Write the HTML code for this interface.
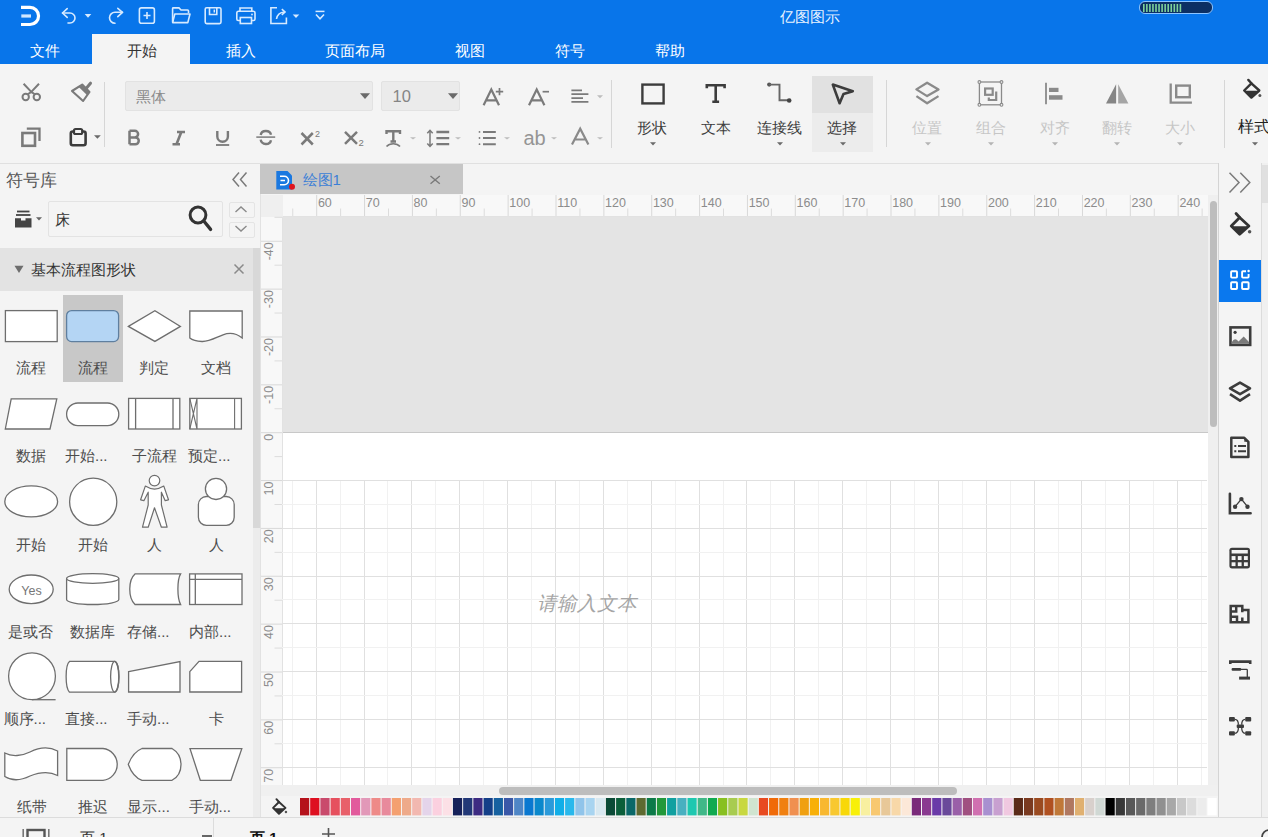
<!DOCTYPE html><html><head><meta charset="utf-8"><style>
html,body{margin:0;padding:0}
body{width:1268px;height:837px;overflow:hidden;position:relative;background:#f4f4f4;font-family:'Liberation Sans',sans-serif}
.t{position:absolute;white-space:nowrap;line-height:1;}
.b{position:absolute}
.s{position:absolute;overflow:visible}
</style></head><body>
<div class="b" style="left:0px;top:0px;width:1268px;height:64px;background:#0875ea;"></div>
<div class="b" style="left:92px;top:34px;width:98px;height:30px;background:#f4f4f4;"></div>
<svg class="s" style="left:18px;top:3px;" width="26" height="27" viewBox="0 0 26 27"><path d="M3,4.4 H12 A8.55,8.55 0 0 1 12,21.5 H3" fill="none" stroke="#fff" stroke-width="3.2"/><path d="M3.3,13 H13" stroke="#cfe6ff" stroke-width="3.2"/></svg>
<svg class="s" style="left:60px;top:6px;" width="20" height="20" viewBox="0 0 20 20"><path d="M2.5,7 H10 A5,5 0 0 1 10,17 H8" fill="none" stroke="#d6eaff" stroke-width="1.6" stroke-linecap="round"/><path d="M7.2,2.6 L2.5,7 L7.2,11.4" fill="none" stroke="#d6eaff" stroke-width="1.6" stroke-linecap="round" stroke-linejoin="round"/></svg>
<svg class="s" style="left:84px;top:13px;" width="8" height="6" viewBox="0 0 8 6"><path d="M0.7,1 H7.3 L4,4.8Z" fill="#d6eaff"/></svg>
<svg class="s" style="left:105px;top:6px;" width="20" height="20" viewBox="0 0 20 20"><path d="M17.5,6.3 H10 A5.5,5.5 0 0 0 10,17.3" fill="none" stroke="#d6eaff" stroke-width="1.6" stroke-linecap="round"/><path d="M12.8,2.3 L17.5,6.3 L12.8,10.7" fill="none" stroke="#d6eaff" stroke-width="1.6" stroke-linecap="round" stroke-linejoin="round"/></svg>
<svg class="s" style="left:136px;top:5px;" width="22" height="22" viewBox="0 0 22 22"><rect x="3.4" y="2.9" width="15" height="15.4" rx="2" fill="none" stroke="#d6eaff" stroke-width="1.6"/><path d="M11,7 V14 M7.5,10.5 H14.5" stroke="#d6eaff" stroke-width="1.6"/></svg>
<svg class="s" style="left:169px;top:5px;" width="24" height="22" viewBox="0 0 24 22"><path d="M3.6,17 V3.5 Q3.6,2.9 4.3,2.9 H10 L12,5 H18.5 Q19.5,5 19.5,6 V8" fill="none" stroke="#d6eaff" stroke-width="1.6" stroke-linejoin="round"/><path d="M3.6,17.6 L5.8,9 H21 L18.8,17.6 Z" fill="none" stroke="#d6eaff" stroke-width="1.6" stroke-linejoin="round"/></svg>
<svg class="s" style="left:202px;top:5px;" width="22" height="22" viewBox="0 0 22 22"><rect x="3.2" y="2.8" width="15.8" height="15.8" rx="1.5" fill="none" stroke="#d6eaff" stroke-width="1.6"/><path d="M7.5,2.8 V9.5 H14.8 V2.8" fill="none" stroke="#d6eaff" stroke-width="1.6"/><path d="M12.3,4.6 V7.5" stroke="#d6eaff" stroke-width="1.5"/></svg>
<svg class="s" style="left:234px;top:5px;" width="24" height="22" viewBox="0 0 24 22"><path d="M6,6.3 V3 H17.8 V6.3" fill="none" stroke="#d6eaff" stroke-width="1.6"/><path d="M6.3,15.5 H4.2 Q2.8,15.5 2.8,14 V8 Q2.8,6.3 4.5,6.3 H19.5 Q21,6.3 21,8 V14 Q21,15.5 19.6,15.5 H17.5" fill="none" stroke="#d6eaff" stroke-width="1.6"/><rect x="6.3" y="12.5" width="11.2" height="6" fill="none" stroke="#d6eaff" stroke-width="1.6"/><circle cx="18" cy="9.5" r="0.9" fill="#d6eaff"/></svg>
<svg class="s" style="left:268px;top:5px;" width="22" height="22" viewBox="0 0 22 22"><path d="M9,2.8 H2.9 V18.5 H18.4 V12.5" fill="none" stroke="#d6eaff" stroke-width="1.6"/><path d="M8.5,14 Q9.5,7.5 16.5,7" fill="none" stroke="#d6eaff" stroke-width="1.6"/><path d="M13.8,4.2 L17,7 L13.8,9.8" fill="none" stroke="#d6eaff" stroke-width="1.6"/></svg>
<svg class="s" style="left:292px;top:13px;" width="8" height="6" viewBox="0 0 8 6"><path d="M0.7,1.5 H7.3 L4,5Z" fill="#d6eaff"/></svg>
<svg class="s" style="left:313px;top:8px;" width="14" height="14" viewBox="0 0 14 14"><path d="M2.5,3.4 H11.5" stroke="#d6eaff" stroke-width="1.5"/><path d="M3,6.5 L7,10.8 L11,6.5" fill="none" stroke="#d6eaff" stroke-width="1.6"/></svg>
<div class="t" style="left:780px;top:9px;font-size:15px;color:#eaf3ff;">亿图图示</div>
<div class="b" style="left:1139px;top:1px;width:72px;height:11px;border:1.3px solid #8cc4ff;border-radius:6px;background:#0c2f63"></div>
<svg class="s" style="left:1143px;top:3.5px;" width="42" height="8" viewBox="0 0 42 8"><rect x="0.00" y="0" width="1.6" height="8" fill="#7ed29a"/><rect x="3.05" y="0" width="1.6" height="8" fill="#7ed29a"/><rect x="6.10" y="0" width="1.6" height="8" fill="#7ed29a"/><rect x="9.15" y="0" width="1.6" height="8" fill="#7ed29a"/><rect x="12.20" y="0" width="1.6" height="8" fill="#7ed29a"/><rect x="15.25" y="0" width="1.6" height="8" fill="#7ed29a"/><rect x="18.30" y="0" width="1.6" height="8" fill="#7ed29a"/><rect x="21.35" y="0" width="1.6" height="8" fill="#7ed29a"/><rect x="24.40" y="0" width="1.6" height="8" fill="#7ed29a"/><rect x="27.45" y="0" width="1.6" height="8" fill="#7ed29a"/><rect x="30.50" y="0" width="1.6" height="8" fill="#7ed29a"/><rect x="33.55" y="0" width="1.6" height="8" fill="#7ed29a"/><rect x="36.60" y="0" width="1.6" height="8" fill="#7ed29a"/></svg>
<div class="t" style="left:30px;top:43px;font-size:15px;color:#fff;">文件</div>
<div class="t" style="left:127px;top:43px;font-size:15px;color:#333;">开始</div>
<div class="t" style="left:226px;top:43px;font-size:15px;color:#fff;">插入</div>
<div class="t" style="left:325px;top:43px;font-size:15px;color:#fff;">页面布局</div>
<div class="t" style="left:455px;top:43px;font-size:15px;color:#fff;">视图</div>
<div class="t" style="left:555px;top:43px;font-size:15px;color:#fff;">符号</div>
<div class="t" style="left:655px;top:43px;font-size:15px;color:#fff;">帮助</div>
<div class="b" style="left:0px;top:163px;width:1268px;height:1px;background:#e0e0e0;"></div>
<svg class="s" style="left:15px;top:78px;" width="30" height="28" viewBox="0 0 30 28"><path d="M8.6,5.7 L16.3,13.9 L24,5.7" fill="none" stroke="#7a7a7a" stroke-width="2"/><path d="M16.3,13.9 L12.5,16.5 M16.3,13.9 L20.1,16.5" stroke="#7a7a7a" stroke-width="2"/><circle cx="10.7" cy="19" r="3.2" fill="none" stroke="#7a7a7a" stroke-width="2"/><circle cx="21.8" cy="19" r="3.2" fill="none" stroke="#7a7a7a" stroke-width="2"/></svg>
<svg class="s" style="left:68px;top:78px;" width="30" height="28" viewBox="0 0 30 28"><path d="M4,13 L14.2,6.6 L21.5,13.9 L15.1,23 Z" fill="none" stroke="#7a7a7a" stroke-width="2.1" stroke-linejoin="round"/><path d="M10.5,8.8 L14.2,6.6 L21.5,13.9 L19.2,17.2 Z" fill="#7a7a7a"/><path d="M18.5,10 L22.5,5.2" stroke="#7a7a7a" stroke-width="3" stroke-linecap="round"/></svg>
<svg class="s" style="left:18px;top:125px;" width="26" height="24" viewBox="0 0 26 24"><path d="M8.8,3.7 H21.5 V16" fill="none" stroke="#7a7a7a" stroke-width="2.3"/><rect x="4.4" y="8" width="12.6" height="12.8" fill="none" stroke="#7a7a7a" stroke-width="2.6"/></svg>
<svg class="s" style="left:66px;top:125px;" width="24" height="24" viewBox="0 0 24 24"><rect x="4.8" y="6.5" width="14.8" height="13.8" rx="2" fill="none" stroke="#3c3c3c" stroke-width="2.6"/><rect x="8" y="4" width="8.2" height="5" rx="1.6" fill="#f4f4f4" stroke="#3c3c3c" stroke-width="2.2"/></svg>
<svg class="s" style="left:94px;top:135px;" width="6.8" height="4.7" viewBox="0 0 6.8 4.7"><path d="M0,0.3 H6.8 L3.4,3.7Z" fill="#6a6a6a"/></svg>
<div class="b" style="left:104px;top:82px;width:1px;height:65px;background:#d6d6d6;"></div>
<div class="b" style="left:125px;top:81px;width:246px;height:28px;background:#ebebeb;border:1px solid #e2e2e2;border-radius:2px"></div>
<div class="t" style="left:136px;top:89px;font-size:15px;color:#8a8a8a;">黑体</div>
<svg class="s" style="left:360px;top:93px;" width="10" height="7" viewBox="0 0 10 7"><path d="M0,0.3 H10 L5.0,6Z" fill="#6a6a6a"/></svg>
<div class="b" style="left:381px;top:81px;width:77px;height:28px;background:#ebebeb;border:1px solid #e2e2e2;border-radius:2px"></div>
<div class="t" style="left:392.5px;top:88.3px;font-size:16.5px;color:#858585;">10</div>
<svg class="s" style="left:447.5px;top:93px;" width="10" height="7" viewBox="0 0 10 7"><path d="M0,0.3 H10 L5.0,6Z" fill="#6a6a6a"/></svg>
<svg class="s" style="left:120px;top:122px;" width="170" height="30" viewBox="0 0 170 30"><path d="M9.5,8.8 V22.3 M9.5,8.8 H14.8 A3.3,3.3 0 0 1 14.8,15.4 H9.5 M9.5,15.4 H15.3 A3.45,3.45 0 0 1 15.3,22.3 H9.5" fill="none" stroke="#7a7a7a" stroke-width="2.5"/>
<path d="M57,10 H65 M52.5,22.3 H60 M61.3,10 L56.5,22.3" fill="none" stroke="#7a7a7a" stroke-width="2.6"/>
<path d="M97.3,9 V14.5 A5.3,5.3 0 0 0 107.9,14.5 V9" fill="none" stroke="#7a7a7a" stroke-width="2.4"/><path d="M96,23 H109.2" stroke="#7a7a7a" stroke-width="1.8"/>
<path d="M140.7,13 A5.2,4.6 0 0 1 151,12.8 M140.7,17.7 A5.2,4.6 0 0 0 151,18.2" fill="none" stroke="#7a7a7a" stroke-width="2.4"/><path d="M136.3,15.1 H155.2" stroke="#7a7a7a" stroke-width="1.5"/></svg>
<svg class="s" style="left:295px;top:122px;" width="170" height="30" viewBox="0 0 170 30"><path d="M6.5,11 L17.8,22.5 M17.8,11 L6.5,22.5" stroke="#7a7a7a" stroke-width="2.5"/>
<text x="20" y="15.4" font-family="Liberation Sans" font-size="9" fill="#7a7a7a">2</text>
<path d="M50,9.8 L62,21.8 M62,9.8 L50,21.8" stroke="#7a7a7a" stroke-width="2.5"/>
<text x="63.5" y="23.5" font-family="Liberation Sans" font-size="9.5" fill="#7a7a7a">2</text>
<path d="M91.5,12 V9.2 H105 V12 M98.3,9.2 V19.5 M95.5,19.5 H101" fill="none" stroke="#7a7a7a" stroke-width="2.4"/><path d="M91.5,24.6 A8,6 0 0 1 105,24.6" fill="none" stroke="#7a7a7a" stroke-width="1.6"/>
<path d="M135,9 V23.5 M132.3,11.3 L135,8.3 L137.7,11.3 M132.3,21.6 L135,24.5 L137.7,21.6" fill="none" stroke="#7a7a7a" stroke-width="1.5"/>
<path d="M141.4,10 H154.2 M141.4,16.1 H154.2 M141.4,22.1 H154.2" stroke="#7a7a7a" stroke-width="2.3"/></svg>
<svg class="s" style="left:409.6px;top:137.2px;" width="6" height="3.6" viewBox="0 0 6 3.6"><path d="M0,0.3 H6 L3.0,2.6Z" fill="#bdbdbd"/></svg>
<svg class="s" style="left:455px;top:137.2px;" width="6" height="3.6" viewBox="0 0 6 3.6"><path d="M0,0.3 H6 L3.0,2.6Z" fill="#bdbdbd"/></svg>
<svg class="s" style="left:475px;top:80px;" width="135" height="30" viewBox="0 0 135 30"><path d="M8.6,25.3 L16.3,9.5 L24,25.3 M11.2,20.3 H21.4" fill="none" stroke="#7a7a7a" stroke-width="2.2"/>
<path d="M20.8,11.6 H28.2 M24.5,8 V15.2" stroke="#7a7a7a" stroke-width="1.7"/>
<path d="M54,25.3 L61.7,9.5 L69.4,25.3 M56.6,20.3 H66.8" fill="none" stroke="#7a7a7a" stroke-width="2.2"/>
<path d="M67.6,11.7 H74" stroke="#7a7a7a" stroke-width="1.7"/>
<path d="M96.4,10.4 H107 M96.4,14.2 H113.4 M96.4,18.1 H108 M96.4,21.8 H113.4" stroke="#7a7a7a" stroke-width="1.8"/></svg>
<svg class="s" style="left:597px;top:95.3px;" width="6" height="4.2" viewBox="0 0 6 4.2"><path d="M0,0.3 H6 L3.0,3.2Z" fill="#bdbdbd"/></svg>
<svg class="s" style="left:475px;top:122px;" width="135" height="30" viewBox="0 0 135 30"><circle cx="4.5" cy="9.9" r="0.9" fill="#7a7a7a"/><circle cx="4.5" cy="16" r="0.9" fill="#7a7a7a"/><circle cx="4.5" cy="22.2" r="0.9" fill="#7a7a7a"/>
<path d="M8,9.9 H20.8 M8,16 H20.8 M8,22.2 H20.8" stroke="#7a7a7a" stroke-width="2"/>
<text x="48.6" y="22.7" font-family="Liberation Sans" font-size="20" fill="#959595" letter-spacing="-0.3">ab</text>
<path d="M97,22.4 L105.2,6.7 L113.4,22.4 M99.8,17.5 H110.6" fill="none" stroke="#8a8a8a" stroke-width="2.2"/></svg>
<svg class="s" style="left:504.3px;top:137.2px;" width="6" height="3.6" viewBox="0 0 6 3.6"><path d="M0,0.3 H6 L3.0,2.6Z" fill="#bdbdbd"/></svg>
<svg class="s" style="left:550.6px;top:137.2px;" width="6" height="3.6" viewBox="0 0 6 3.6"><path d="M0,0.3 H6 L3.0,2.6Z" fill="#bdbdbd"/></svg>
<svg class="s" style="left:597px;top:137.2px;" width="6" height="3.6" viewBox="0 0 6 3.6"><path d="M0,0.3 H6 L3.0,2.6Z" fill="#bdbdbd"/></svg>
<div class="b" style="left:611px;top:80px;width:1px;height:68px;background:#d6d6d6;"></div>
<div class="b" style="left:811.5px;top:76px;width:61.5px;height:36.5px;background:#e1e1e1;"></div>
<div class="b" style="left:811.5px;top:112.5px;width:61.5px;height:39.5px;background:#ececec;"></div>
<svg class="s" style="left:630px;top:76px;" width="240" height="36" viewBox="0 0 240 36"><rect x="12.4" y="8.6" width="21.2" height="18.8" fill="none" stroke="#3c3c3c" stroke-width="2.4"/>
<path d="M76.8,12.2 V9.3 H94.6 V12.2 M85.7,9.3 V25.8 M82.3,25.8 H89.1" fill="none" stroke="#3c3c3c" stroke-width="2.6"/>
<circle cx="139.2" cy="8.6" r="2.1" fill="#555"/><path d="M139.2,8.6 H149.5 V24.3 H159" fill="none" stroke="#666" stroke-width="1.9"/><circle cx="159.2" cy="24.5" r="2.3" fill="#444"/>
<path d="M202.8,8.6 L222.8,15.2 L213.5,18 L209.6,27.2 Z" fill="none" stroke="#3c3c3c" stroke-width="2.6" stroke-linejoin="round"/></svg>
<div class="t" style="left:637px;top:120px;font-size:15px;color:#3f3f3f;">形状</div>
<div class="t" style="left:701px;top:120px;font-size:15px;color:#3f3f3f;">文本</div>
<div class="t" style="left:756.7px;top:120px;font-size:15px;color:#3f3f3f;">连接线</div>
<div class="t" style="left:826.7px;top:120px;font-size:15px;color:#3f3f3f;">选择</div>
<div class="t" style="left:912px;top:120px;font-size:15px;color:#c6c6c6;">位置</div>
<div class="t" style="left:976px;top:120px;font-size:15px;color:#c6c6c6;">组合</div>
<div class="t" style="left:1039.5px;top:120px;font-size:15px;color:#c6c6c6;">对齐</div>
<div class="t" style="left:1102px;top:120px;font-size:15px;color:#c6c6c6;">翻转</div>
<div class="t" style="left:1164.5px;top:120px;font-size:15px;color:#c6c6c6;">大小</div>
<div class="t" style="left:1238px;top:119px;font-size:16px;color:#222;">样式</div>
<svg class="s" style="left:650px;top:141.6px;" width="6" height="4.5" viewBox="0 0 6 4.5"><path d="M0,0.3 H6 L3.0,3.5Z" fill="#6a6a6a"/></svg>
<svg class="s" style="left:776.5px;top:141.6px;" width="6" height="4.5" viewBox="0 0 6 4.5"><path d="M0,0.3 H6 L3.0,3.5Z" fill="#6a6a6a"/></svg>
<svg class="s" style="left:839.5px;top:141.6px;" width="6" height="4.5" viewBox="0 0 6 4.5"><path d="M0,0.3 H6 L3.0,3.5Z" fill="#6a6a6a"/></svg>
<div class="b" style="left:886px;top:80px;width:1px;height:67px;background:#d6d6d6;"></div>
<svg class="s" style="left:905px;top:76px;" width="170" height="36" viewBox="0 0 170 36"><path d="M11.4,13.4 L22.1,6.7 L33.5,13.4 L22.1,20.1 Z" fill="none" stroke="#8a8a8a" stroke-width="2.3" stroke-linejoin="round"/><path d="M11.4,20.1 L22.1,27.3 L33.5,20.1" fill="none" stroke="#8a8a8a" stroke-width="2.3" stroke-linejoin="round"/>
<rect x="74.4" y="6" width="22.1" height="22.8" fill="none" stroke="#8a8a8a" stroke-width="1.3"/>
<circle cx="74.4" cy="6" r="1.4" fill="#f4f4f4" stroke="#8a8a8a" stroke-width="1.1"/><circle cx="96.5" cy="6" r="1.4" fill="#f4f4f4" stroke="#8a8a8a" stroke-width="1.1"/><circle cx="74.4" cy="28.8" r="1.4" fill="#f4f4f4" stroke="#8a8a8a" stroke-width="1.1"/><circle cx="96.5" cy="28.8" r="1.4" fill="#f4f4f4" stroke="#8a8a8a" stroke-width="1.1"/>
<rect x="80.1" y="12.5" width="7.6" height="6.3" fill="none" stroke="#8a8a8a" stroke-width="2.2"/><path d="M91.2,15.4 V24 H83.8 V21.5" fill="none" stroke="#8a8a8a" stroke-width="2.2"/>
<path d="M141,6.7 V28.2" stroke="#8a8a8a" stroke-width="1.8"/><rect x="144" y="11.8" width="9.5" height="4.2" fill="#8a8a8a"/><rect x="144" y="19.2" width="13.5" height="4.5" fill="#8a8a8a"/></svg>
<svg class="s" style="left:1095px;top:72px;" width="173" height="40" viewBox="0 0 173 40"><path d="M11,31.4 L21.1,12.3 V31.4 Z" fill="#858585"/><path d="M23.2,12.3 L33.4,31.4 H23.2 Z" fill="#a5a5a5"/>
<path d="M75.7,11.6 V30.7 H96.9" fill="none" stroke="#8a8a8a" stroke-width="2.3"/><rect x="81.2" y="13.6" width="13.6" height="11.6" fill="none" stroke="#8a8a8a" stroke-width="2.4"/></svg>
<svg class="s" style="left:925px;top:141.6px;" width="6" height="4.5" viewBox="0 0 6 4.5"><path d="M0,0.3 H6 L3.0,3.5Z" fill="#b4b4b4"/></svg>
<svg class="s" style="left:987.5px;top:141.6px;" width="6" height="4.5" viewBox="0 0 6 4.5"><path d="M0,0.3 H6 L3.0,3.5Z" fill="#b4b4b4"/></svg>
<svg class="s" style="left:1051.5px;top:141.6px;" width="6" height="4.5" viewBox="0 0 6 4.5"><path d="M0,0.3 H6 L3.0,3.5Z" fill="#b4b4b4"/></svg>
<svg class="s" style="left:1114px;top:141.6px;" width="6" height="4.5" viewBox="0 0 6 4.5"><path d="M0,0.3 H6 L3.0,3.5Z" fill="#b4b4b4"/></svg>
<svg class="s" style="left:1177px;top:141.6px;" width="6" height="4.5" viewBox="0 0 6 4.5"><path d="M0,0.3 H6 L3.0,3.5Z" fill="#b4b4b4"/></svg>
<div class="b" style="left:1224px;top:80px;width:1px;height:68px;background:#d6d6d6;"></div>
<svg class="s" style="left:1238px;top:76px;" width="30.0" height="28.0" viewBox="0 0 30.0 28.0"><g transform="scale(1.0)"><path d="M6.2,14.5 L13.4,7.3 L21.3,14.5 L13.4,21.6 Z" fill="none" stroke="#333" stroke-width="2.4" stroke-linejoin="round"/><path d="M6.4,14.8 H21 L13.4,21.6 Z" fill="#333"/><path d="M13.4,7.3 L10.3,3.9" stroke="#333" stroke-width="2.4" stroke-linecap="round"/><circle cx="21.9" cy="19.4" r="1.5" fill="#555"/></g></svg>
<svg class="s" style="left:1252px;top:142px;" width="6" height="4.5" viewBox="0 0 6 4.5"><path d="M0,0.3 H6 L3.0,3.5Z" fill="#6a6a6a"/></svg>
<div class="t" style="left:6px;top:172px;font-size:17px;color:#555;">符号库</div>
<svg class="s" style="left:228px;top:168px;" width="24" height="24" viewBox="0 0 24 24"><path d="M11,4.5 L5,11.5 L11,18.5 M18.5,4.5 L12.5,11.5 L18.5,18.5" fill="none" stroke="#7a7a7a" stroke-width="1.5"/></svg>
<svg class="s" style="left:12px;top:206px;" width="32" height="26" viewBox="0 0 32 26"><path d="M5,5.5 H17.5" stroke="#444" stroke-width="1.8"/><path d="M4,9 H18.5" stroke="#444" stroke-width="1.8"/><path d="M3,12.2 H9 V14.5 H13.5 V12.2 H19.5 V21.5 H3 Z" fill="#444"/></svg>
<svg class="s" style="left:36px;top:216.5px;" width="6" height="4.6" viewBox="0 0 6 4.6"><path d="M0,0.3 H6 L3.0,3.6Z" fill="#666"/></svg>
<div class="b" style="left:47.5px;top:201px;width:173px;height:34px;background:#f4f4f4;border:1px solid #e3e3e3;border-radius:2px"></div>
<div class="t" style="left:54.5px;top:212px;font-size:15px;color:#333;">床</div>
<svg class="s" style="left:184px;top:201px;" width="32" height="34" viewBox="0 0 32 34"><circle cx="14" cy="14" r="7.9" fill="none" stroke="#333" stroke-width="3"/><path d="M19.8,20 L26.6,28.4" stroke="#333" stroke-width="3.3" stroke-linecap="round"/></svg>
<div class="b" style="left:228.5px;top:201.5px;width:24px;height:14px;border:1px solid #e4e4e4;border-radius:2px"></div>
<div class="b" style="left:228.5px;top:221.5px;width:24px;height:14px;border:1px solid #e4e4e4;border-radius:2px"></div>
<svg class="s" style="left:228px;top:201px;" width="26" height="36" viewBox="0 0 26 36"><path d="M7.5,11 L13,6 L18.5,11" fill="none" stroke="#8a8a8a" stroke-width="1.4"/><path d="M7.5,25 L13,30 L18.5,25" fill="none" stroke="#8a8a8a" stroke-width="1.4"/></svg>
<div class="b" style="left:0px;top:248px;width:253px;height:43px;background:#e3e3e3;"></div>
<svg class="s" style="left:13px;top:264px;" width="12" height="10" viewBox="0 0 12 10"><path d="M1.5,1.8 H10.5 L6,9 Z" fill="#6e6e6e"/></svg>
<div class="t" style="left:31px;top:262px;font-size:15.3px;color:#333;">基本流程图形状</div>
<svg class="s" style="left:231px;top:261px;" width="16" height="16" viewBox="0 0 16 16"><path d="M3.5,3.5 L12.5,12.5 M12.5,3.5 L3.5,12.5" stroke="#8a8a8a" stroke-width="1.5"/></svg>
<div class="b" style="left:253px;top:248px;width:6.5px;height:280px;background:#d8d8d8;"></div>
<div class="b" style="left:253px;top:528px;width:6.5px;height:289px;background:#ececec;"></div>
<div class="b" style="left:259.5px;top:163px;width:1px;height:654px;background:#e2e2e2;"></div>
<div class="b" style="left:62.7px;top:295px;width:60px;height:86.6px;background:#c8c8c8;"></div>
<svg class="s" style="left:0;top:0" width="260" height="837" viewBox="0 0 260 837">
<rect x="5.4" y="310.6" width="51.8" height="31" fill="#fff" stroke="#6e6e6e" stroke-width="1.3"/>
<rect x="66.6" y="310.6" width="52" height="31" rx="5" fill="#b4d5f4" stroke="#5f7f9f" stroke-width="1.3"/>
<path d="M128.4,326.4 L154.9,310.8 L180.4,326.4 L154.9,341.4 Z" fill="#fff" stroke="#6e6e6e" stroke-width="1.3"/>
<path d="M189.8,311 H242.2 V338 C236,333 229,332.5 223,334.8 C215,338 209,341.8 202,341.5 C196,341.2 192,339.8 189.8,338 Z" fill="#fff" stroke="#6e6e6e" stroke-width="1.3"/>
<path d="M11.2,398.8 H56.8 L50,429 H5.3 Z" fill="#fff" stroke="#6e6e6e" stroke-width="1.3"/>
<rect x="66.6" y="403" width="52.2" height="22.6" rx="11.3" fill="#fff" stroke="#6e6e6e" stroke-width="1.3"/>
<rect x="128.6" y="398.4" width="51.2" height="30.6" fill="#fff" stroke="#6e6e6e" stroke-width="1.3"/><path d="M135.6,398.4 V429 M173,398.4 V429" stroke="#6e6e6e" stroke-width="1.3"/>
<rect x="189.8" y="398.4" width="51.6" height="30.6" fill="#fff" stroke="#6e6e6e" stroke-width="1.3"/><path d="M197,398.4 V429 M234.6,398.4 V429 M189.8,398.4 L197,429 M197,398.4 L189.8,429" stroke="#6e6e6e" stroke-width="1.1"/>
<ellipse cx="31.2" cy="501.4" rx="26.4" ry="15.5" fill="#fff" stroke="#6e6e6e" stroke-width="1.3"/>
<circle cx="93.2" cy="501.8" r="23.6" fill="#fff" stroke="#6e6e6e" stroke-width="1.3"/>
<path d="M145.3,486.1 Q154.5,492 163.8,486.1 L168.5,499.8 L165.2,500.7 L161.4,492.2 V505 L167.1,527.2 H161.4 L154.5,507.8 L148.2,527.2 H142.5 L148.2,505 V492.2 L143.9,500.7 L140.6,499.8 Z" fill="#fff" stroke="#6e6e6e" stroke-width="1.2" stroke-linejoin="round"/>
<circle cx="154.5" cy="480.6" r="5.3" fill="#fff" stroke="#6e6e6e" stroke-width="1.2"/>
<rect x="198.4" y="496.5" width="35.8" height="28.8" rx="8" fill="#fff" stroke="#6e6e6e" stroke-width="1.3"/>
<circle cx="216" cy="488.9" r="10.6" fill="#fff" stroke="#6e6e6e" stroke-width="1.3"/>
<ellipse cx="31.2" cy="589.3" rx="22" ry="14.3" fill="#fff" stroke="#6e6e6e" stroke-width="1.3"/>
<text x="31.5" y="595" text-anchor="middle" font-family="Liberation Sans" font-size="12.5" fill="#777">Yes</text>
<path d="M66.6,578.5 V599.5 A26.1,5 0 0 0 118.8,599.5 V578.5" fill="#fff" stroke="#6e6e6e" stroke-width="1.3"/><ellipse cx="92.7" cy="578.5" rx="26.1" ry="4.8" fill="#fff" stroke="#6e6e6e" stroke-width="1.3"/>
<path d="M135,573.9 H180.6 C177,580 177,598 180.6,604.5 H135 C128,598 128,580 135,573.9 Z" fill="#fff" stroke="#6e6e6e" stroke-width="1.3"/>
<rect x="189.6" y="573.9" width="52.4" height="30.6" fill="#fff" stroke="#6e6e6e" stroke-width="1.3"/><path d="M189.6,579.3 H242 M195.3,573.9 V604.5" stroke="#6e6e6e" stroke-width="1.3"/>
<circle cx="32" cy="676.3" r="23.4" fill="#fff" stroke="#6e6e6e" stroke-width="1.3"/><path d="M32,699.7 H55.6" stroke="#6e6e6e" stroke-width="1.3"/>
<path d="M69.5,661.4 H114.8 A4.5,15.5 0 0 1 114.8,692.2 H69.5 C65,688 65,665 69.5,661.4 Z" fill="#fff" stroke="#6e6e6e" stroke-width="1.3"/><ellipse cx="114.8" cy="676.8" rx="4.2" ry="15.4" fill="none" stroke="#6e6e6e" stroke-width="1.3"/>
<path d="M128.6,671.6 L180,661.5 V692 H128.6 Z" fill="#fff" stroke="#6e6e6e" stroke-width="1.3"/>
<path d="M189.8,671.6 L199,661.4 H241.6 V692 H189.8 Z" fill="#fff" stroke="#6e6e6e" stroke-width="1.3"/>
<path d="M4.8,753 C12,757 22,756 30,752 C40,747 50,747 57.6,751 V775.5 C50,771.5 40,772 30,776 C20,781 12,781 4.8,776.5 Z" fill="#fff" stroke="#6e6e6e" stroke-width="1.3"/>
<path d="M66.8,748.5 H103 A16,16 0 0 1 103,780.3 H66.8 Z" fill="#fff" stroke="#6e6e6e" stroke-width="1.3"/>
<path d="M128.3,764.4 Q133,752 142,748.5 H172 C178,752 181,758 181,764.4 C181,771 178,777 172,780.3 H142 Q133,777 128.3,764.4 Z" fill="#fff" stroke="#6e6e6e" stroke-width="1.3"/>
<path d="M190,748.6 H241.8 L231,780.3 H200.3 Z" fill="#fff" stroke="#6e6e6e" stroke-width="1.3"/>
</svg>
<div class="t" style="left:16.3px;top:360px;font-size:15px;color:#4c4c4c;">流程</div>
<div class="t" style="left:77.8px;top:360px;font-size:15px;color:#4c4c4c;">流程</div>
<div class="t" style="left:139px;top:360px;font-size:15px;color:#4c4c4c;">判定</div>
<div class="t" style="left:200.6px;top:360px;font-size:15px;color:#4c4c4c;">文档</div>
<div class="t" style="left:15.8px;top:448px;font-size:15px;color:#4c4c4c;">数据</div>
<div class="t" style="left:65px;top:448px;font-size:15px;color:#4c4c4c;">开始...</div>
<div class="t" style="left:131.7px;top:448px;font-size:15px;color:#4c4c4c;">子流程</div>
<div class="t" style="left:188px;top:448px;font-size:15px;color:#4c4c4c;">预定...</div>
<div class="t" style="left:16px;top:537px;font-size:15px;color:#4c4c4c;">开始</div>
<div class="t" style="left:77.9px;top:537px;font-size:15px;color:#4c4c4c;">开始</div>
<div class="t" style="left:147px;top:537px;font-size:15px;color:#4c4c4c;">人</div>
<div class="t" style="left:208.6px;top:537px;font-size:15px;color:#4c4c4c;">人</div>
<div class="t" style="left:8.3px;top:624px;font-size:15px;color:#4c4c4c;">是或否</div>
<div class="t" style="left:70px;top:624px;font-size:15px;color:#4c4c4c;">数据库</div>
<div class="t" style="left:127px;top:624px;font-size:15px;color:#4c4c4c;">存储...</div>
<div class="t" style="left:189px;top:624px;font-size:15px;color:#4c4c4c;">内部...</div>
<div class="t" style="left:3.5px;top:711px;font-size:15px;color:#4c4c4c;">顺序...</div>
<div class="t" style="left:65px;top:711px;font-size:15px;color:#4c4c4c;">直接...</div>
<div class="t" style="left:127px;top:711px;font-size:15px;color:#4c4c4c;">手动...</div>
<div class="t" style="left:208.6px;top:711px;font-size:15px;color:#4c4c4c;">卡</div>
<div class="t" style="left:16.6px;top:799px;font-size:15px;color:#4c4c4c;">纸带</div>
<div class="t" style="left:77.7px;top:799px;font-size:15px;color:#4c4c4c;">推迟</div>
<div class="t" style="left:127.3px;top:799px;font-size:15px;color:#4c4c4c;">显示...</div>
<div class="t" style="left:188.5px;top:799px;font-size:15px;color:#4c4c4c;">手动...</div>
<div class="b" style="left:260.5px;top:164px;width:958px;height:31px;background:#f4f4f4;"></div>
<div class="b" style="left:260px;top:164.2px;width:202.7px;height:29.8px;background:#c6c6c6;"></div>
<svg class="s" style="left:273px;top:168px;" width="26" height="24" viewBox="0 0 26 24"><path d="M3.3,3 H14.5 L19,7.5 V21.6 H3.3 Z" fill="#1a78e0"/><path d="M7,8.2 H11.2 A4.3,4.3 0 0 1 11.2,16.8 H7 M7.5,12.5 H12" fill="none" stroke="#fff" stroke-width="1.6"/><circle cx="19" cy="18.7" r="3" fill="#e0141e"/></svg>
<div class="t" style="left:302.5px;top:171.7px;font-size:15px;color:#3c7fd6;">绘图1</div>
<svg class="s" style="left:428px;top:173px;" width="14" height="14" viewBox="0 0 14 14"><path d="M2.5,3 L11.8,10.8 M11.8,3 L2.5,10.8" stroke="#7a7a7a" stroke-width="1.4"/></svg>
<div class="b" style="left:260.5px;top:194.5px;width:947px;height:22px;background:#f8f8f8;"></div>
<div class="b" style="left:260.5px;top:194.5px;width:22px;height:22px;background:#efefef;"></div>
<div class="b" style="left:260.5px;top:216.5px;width:22px;height:568.5px;background:#f8f8f8;"></div>
<svg class="s" style="left:260.5px;top:194.5px" width="947" height="22"><path d="M31.77,13.5 V22" stroke="#dcdcdc" stroke-width="1"/><path d="M55.70,0 V22" stroke="#d8d8d8" stroke-width="1"/><path d="M79.63,13.5 V22" stroke="#dcdcdc" stroke-width="1"/><path d="M103.56,0 V22" stroke="#d8d8d8" stroke-width="1"/><path d="M127.49,13.5 V22" stroke="#dcdcdc" stroke-width="1"/><path d="M151.42,0 V22" stroke="#d8d8d8" stroke-width="1"/><path d="M175.35,13.5 V22" stroke="#dcdcdc" stroke-width="1"/><path d="M199.28,0 V22" stroke="#d8d8d8" stroke-width="1"/><path d="M223.21,13.5 V22" stroke="#dcdcdc" stroke-width="1"/><path d="M247.14,0 V22" stroke="#d8d8d8" stroke-width="1"/><path d="M271.07,13.5 V22" stroke="#dcdcdc" stroke-width="1"/><path d="M295.00,0 V22" stroke="#d8d8d8" stroke-width="1"/><path d="M318.93,13.5 V22" stroke="#dcdcdc" stroke-width="1"/><path d="M342.86,0 V22" stroke="#d8d8d8" stroke-width="1"/><path d="M366.79,13.5 V22" stroke="#dcdcdc" stroke-width="1"/><path d="M390.72,0 V22" stroke="#d8d8d8" stroke-width="1"/><path d="M414.65,13.5 V22" stroke="#dcdcdc" stroke-width="1"/><path d="M438.58,0 V22" stroke="#d8d8d8" stroke-width="1"/><path d="M462.51,13.5 V22" stroke="#dcdcdc" stroke-width="1"/><path d="M486.44,0 V22" stroke="#d8d8d8" stroke-width="1"/><path d="M510.37,13.5 V22" stroke="#dcdcdc" stroke-width="1"/><path d="M534.30,0 V22" stroke="#d8d8d8" stroke-width="1"/><path d="M558.23,13.5 V22" stroke="#dcdcdc" stroke-width="1"/><path d="M582.16,0 V22" stroke="#d8d8d8" stroke-width="1"/><path d="M606.09,13.5 V22" stroke="#dcdcdc" stroke-width="1"/><path d="M630.02,0 V22" stroke="#d8d8d8" stroke-width="1"/><path d="M653.95,13.5 V22" stroke="#dcdcdc" stroke-width="1"/><path d="M677.88,0 V22" stroke="#d8d8d8" stroke-width="1"/><path d="M701.81,13.5 V22" stroke="#dcdcdc" stroke-width="1"/><path d="M725.74,0 V22" stroke="#d8d8d8" stroke-width="1"/><path d="M749.67,13.5 V22" stroke="#dcdcdc" stroke-width="1"/><path d="M773.60,0 V22" stroke="#d8d8d8" stroke-width="1"/><path d="M797.53,13.5 V22" stroke="#dcdcdc" stroke-width="1"/><path d="M821.46,0 V22" stroke="#d8d8d8" stroke-width="1"/><path d="M845.39,13.5 V22" stroke="#dcdcdc" stroke-width="1"/><path d="M869.32,0 V22" stroke="#d8d8d8" stroke-width="1"/><path d="M893.25,13.5 V22" stroke="#dcdcdc" stroke-width="1"/><path d="M917.18,0 V22" stroke="#d8d8d8" stroke-width="1"/><path d="M941.11,13.5 V22" stroke="#dcdcdc" stroke-width="1"/><text x="56.90" y="12.3" font-family="Liberation Sans" font-size="12.5" fill="#8c8c8c">60</text><text x="104.76" y="12.3" font-family="Liberation Sans" font-size="12.5" fill="#8c8c8c">70</text><text x="152.62" y="12.3" font-family="Liberation Sans" font-size="12.5" fill="#8c8c8c">80</text><text x="200.48" y="12.3" font-family="Liberation Sans" font-size="12.5" fill="#8c8c8c">90</text><text x="248.34" y="12.3" font-family="Liberation Sans" font-size="12.5" fill="#8c8c8c">100</text><text x="296.20" y="12.3" font-family="Liberation Sans" font-size="12.5" fill="#8c8c8c">110</text><text x="344.06" y="12.3" font-family="Liberation Sans" font-size="12.5" fill="#8c8c8c">120</text><text x="391.92" y="12.3" font-family="Liberation Sans" font-size="12.5" fill="#8c8c8c">130</text><text x="439.78" y="12.3" font-family="Liberation Sans" font-size="12.5" fill="#8c8c8c">140</text><text x="487.64" y="12.3" font-family="Liberation Sans" font-size="12.5" fill="#8c8c8c">150</text><text x="535.50" y="12.3" font-family="Liberation Sans" font-size="12.5" fill="#8c8c8c">160</text><text x="583.36" y="12.3" font-family="Liberation Sans" font-size="12.5" fill="#8c8c8c">170</text><text x="631.22" y="12.3" font-family="Liberation Sans" font-size="12.5" fill="#8c8c8c">180</text><text x="679.08" y="12.3" font-family="Liberation Sans" font-size="12.5" fill="#8c8c8c">190</text><text x="726.94" y="12.3" font-family="Liberation Sans" font-size="12.5" fill="#8c8c8c">200</text><text x="774.80" y="12.3" font-family="Liberation Sans" font-size="12.5" fill="#8c8c8c">210</text><text x="822.66" y="12.3" font-family="Liberation Sans" font-size="12.5" fill="#8c8c8c">220</text><text x="870.52" y="12.3" font-family="Liberation Sans" font-size="12.5" fill="#8c8c8c">230</text><text x="918.38" y="12.3" font-family="Liberation Sans" font-size="12.5" fill="#8c8c8c">240</text><path d="M22,21.5 H947" stroke="#e2e2e2" stroke-width="1"/></svg>
<svg class="s" style="left:260.5px;top:216.5px" width="22" height="569"><path d="M13.5,0.33 H22" stroke="#dcdcdc" stroke-width="1"/><path d="M0,24.26 H22" stroke="#d8d8d8" stroke-width="1"/><path d="M13.5,48.19 H22" stroke="#dcdcdc" stroke-width="1"/><path d="M0,72.12 H22" stroke="#d8d8d8" stroke-width="1"/><path d="M13.5,96.05 H22" stroke="#dcdcdc" stroke-width="1"/><path d="M0,119.98 H22" stroke="#d8d8d8" stroke-width="1"/><path d="M13.5,143.91 H22" stroke="#dcdcdc" stroke-width="1"/><path d="M0,167.84 H22" stroke="#d8d8d8" stroke-width="1"/><path d="M13.5,191.77 H22" stroke="#dcdcdc" stroke-width="1"/><path d="M0,215.70 H22" stroke="#d8d8d8" stroke-width="1"/><path d="M13.5,239.63 H22" stroke="#dcdcdc" stroke-width="1"/><path d="M0,263.56 H22" stroke="#d8d8d8" stroke-width="1"/><path d="M13.5,287.49 H22" stroke="#dcdcdc" stroke-width="1"/><path d="M0,311.42 H22" stroke="#d8d8d8" stroke-width="1"/><path d="M13.5,335.35 H22" stroke="#dcdcdc" stroke-width="1"/><path d="M0,359.28 H22" stroke="#d8d8d8" stroke-width="1"/><path d="M13.5,383.21 H22" stroke="#dcdcdc" stroke-width="1"/><path d="M0,407.14 H22" stroke="#d8d8d8" stroke-width="1"/><path d="M13.5,431.07 H22" stroke="#dcdcdc" stroke-width="1"/><path d="M0,455.00 H22" stroke="#d8d8d8" stroke-width="1"/><path d="M13.5,478.93 H22" stroke="#dcdcdc" stroke-width="1"/><path d="M0,502.86 H22" stroke="#d8d8d8" stroke-width="1"/><path d="M13.5,526.79 H22" stroke="#dcdcdc" stroke-width="1"/><path d="M0,550.72 H22" stroke="#d8d8d8" stroke-width="1"/><text transform="translate(12,25.26) rotate(-90)" text-anchor="end" font-family="Liberation Sans" font-size="12.5" fill="#8c8c8c">-40</text><text transform="translate(12,73.12) rotate(-90)" text-anchor="end" font-family="Liberation Sans" font-size="12.5" fill="#8c8c8c">-30</text><text transform="translate(12,120.98) rotate(-90)" text-anchor="end" font-family="Liberation Sans" font-size="12.5" fill="#8c8c8c">-20</text><text transform="translate(12,168.84) rotate(-90)" text-anchor="end" font-family="Liberation Sans" font-size="12.5" fill="#8c8c8c">-10</text><text transform="translate(12,216.70) rotate(-90)" text-anchor="end" font-family="Liberation Sans" font-size="12.5" fill="#8c8c8c">0</text><text transform="translate(12,264.56) rotate(-90)" text-anchor="end" font-family="Liberation Sans" font-size="12.5" fill="#8c8c8c">10</text><text transform="translate(12,312.42) rotate(-90)" text-anchor="end" font-family="Liberation Sans" font-size="12.5" fill="#8c8c8c">20</text><text transform="translate(12,360.28) rotate(-90)" text-anchor="end" font-family="Liberation Sans" font-size="12.5" fill="#8c8c8c">30</text><text transform="translate(12,408.14) rotate(-90)" text-anchor="end" font-family="Liberation Sans" font-size="12.5" fill="#8c8c8c">40</text><text transform="translate(12,456.00) rotate(-90)" text-anchor="end" font-family="Liberation Sans" font-size="12.5" fill="#8c8c8c">50</text><text transform="translate(12,503.86) rotate(-90)" text-anchor="end" font-family="Liberation Sans" font-size="12.5" fill="#8c8c8c">60</text><text transform="translate(12,551.72) rotate(-90)" text-anchor="end" font-family="Liberation Sans" font-size="12.5" fill="#8c8c8c">70</text><path d="M21.5,0 V569" stroke="#e2e2e2" stroke-width="1"/></svg>
<div class="b" style="left:282.5px;top:216.5px;width:925px;height:215.7px;background:#e4e4e4;"></div>
<div class="b" style="left:282.5px;top:432.2px;width:925px;height:352.8px;background:#ffffff;"></div>
<svg class="s" style="left:282px;top:480px" width="925.5" height="305"><path d="M34.50,0 V305" stroke="#e0e0e0" stroke-width="1"/><path d="M10.50,0 V305" stroke="#f1f1f1" stroke-width="1"/><path d="M82.50,0 V305" stroke="#e0e0e0" stroke-width="1"/><path d="M58.50,0 V305" stroke="#f1f1f1" stroke-width="1"/><path d="M129.50,0 V305" stroke="#e0e0e0" stroke-width="1"/><path d="M105.50,0 V305" stroke="#f1f1f1" stroke-width="1"/><path d="M177.50,0 V305" stroke="#e0e0e0" stroke-width="1"/><path d="M153.50,0 V305" stroke="#f1f1f1" stroke-width="1"/><path d="M225.50,0 V305" stroke="#e0e0e0" stroke-width="1"/><path d="M201.50,0 V305" stroke="#f1f1f1" stroke-width="1"/><path d="M273.50,0 V305" stroke="#e0e0e0" stroke-width="1"/><path d="M249.50,0 V305" stroke="#f1f1f1" stroke-width="1"/><path d="M321.50,0 V305" stroke="#e0e0e0" stroke-width="1"/><path d="M297.50,0 V305" stroke="#f1f1f1" stroke-width="1"/><path d="M369.50,0 V305" stroke="#e0e0e0" stroke-width="1"/><path d="M345.50,0 V305" stroke="#f1f1f1" stroke-width="1"/><path d="M417.50,0 V305" stroke="#e0e0e0" stroke-width="1"/><path d="M393.50,0 V305" stroke="#f1f1f1" stroke-width="1"/><path d="M464.50,0 V305" stroke="#e0e0e0" stroke-width="1"/><path d="M441.50,0 V305" stroke="#f1f1f1" stroke-width="1"/><path d="M512.50,0 V305" stroke="#e0e0e0" stroke-width="1"/><path d="M488.50,0 V305" stroke="#f1f1f1" stroke-width="1"/><path d="M560.50,0 V305" stroke="#e0e0e0" stroke-width="1"/><path d="M536.50,0 V305" stroke="#f1f1f1" stroke-width="1"/><path d="M608.50,0 V305" stroke="#e0e0e0" stroke-width="1"/><path d="M584.50,0 V305" stroke="#f1f1f1" stroke-width="1"/><path d="M656.50,0 V305" stroke="#e0e0e0" stroke-width="1"/><path d="M632.50,0 V305" stroke="#f1f1f1" stroke-width="1"/><path d="M704.50,0 V305" stroke="#e0e0e0" stroke-width="1"/><path d="M680.50,0 V305" stroke="#f1f1f1" stroke-width="1"/><path d="M752.50,0 V305" stroke="#e0e0e0" stroke-width="1"/><path d="M728.50,0 V305" stroke="#f1f1f1" stroke-width="1"/><path d="M799.50,0 V305" stroke="#e0e0e0" stroke-width="1"/><path d="M776.50,0 V305" stroke="#f1f1f1" stroke-width="1"/><path d="M847.50,0 V305" stroke="#e0e0e0" stroke-width="1"/><path d="M823.50,0 V305" stroke="#f1f1f1" stroke-width="1"/><path d="M895.50,0 V305" stroke="#e0e0e0" stroke-width="1"/><path d="M871.50,0 V305" stroke="#f1f1f1" stroke-width="1"/><path d="M919.50,0 V305" stroke="#f1f1f1" stroke-width="1"/><path d="M0,0.50 H925" stroke="#e0e0e0" stroke-width="1"/><path d="M0,24.50 H925" stroke="#f1f1f1" stroke-width="1"/><path d="M0,48.50 H925" stroke="#e0e0e0" stroke-width="1"/><path d="M0,72.50 H925" stroke="#f1f1f1" stroke-width="1"/><path d="M0,96.50 H925" stroke="#e0e0e0" stroke-width="1"/><path d="M0,119.50 H925" stroke="#f1f1f1" stroke-width="1"/><path d="M0,143.50 H925" stroke="#e0e0e0" stroke-width="1"/><path d="M0,167.50 H925" stroke="#f1f1f1" stroke-width="1"/><path d="M0,191.50 H925" stroke="#e0e0e0" stroke-width="1"/><path d="M0,215.50 H925" stroke="#f1f1f1" stroke-width="1"/><path d="M0,239.50 H925" stroke="#e0e0e0" stroke-width="1"/><path d="M0,263.50 H925" stroke="#f1f1f1" stroke-width="1"/><path d="M0,287.50 H925" stroke="#e0e0e0" stroke-width="1"/></svg>
<div class="b" style="left:282.5px;top:432px;width:925px;height:1px;background:#c8c8c8;"></div>
<div class="t" style="left:537px;top:594px;font-size:19.5px;color:#a6a6a6;font-style:italic">请输入文本</div>
<div class="b" style="left:1207.5px;top:194.5px;width:11px;height:590.5px;background:#efefef;"></div>
<div class="b" style="left:1209.5px;top:201px;width:7.5px;height:226px;background:#bdbdbd;border-radius:4px"></div>
<div class="b" style="left:260.5px;top:785px;width:958px;height:10.5px;background:#f0f0f0;"></div>
<div class="b" style="left:498.8px;top:787.4px;width:458.5px;height:7.4px;background:#bdbdbd;border-radius:4px"></div>
<div class="b" style="left:1218.3px;top:163px;width:1px;height:654px;background:#d4d4d4;"></div>
<div class="b" style="left:1219.3px;top:163px;width:42px;height:654px;background:#f4f4f4;"></div>
<div class="b" style="left:1261.3px;top:163px;width:1px;height:654px;background:#dcdcdc;"></div>
<div class="b" style="left:1262.3px;top:163px;width:6px;height:654px;background:#f0f0f0;"></div>
<div class="b" style="left:1262.3px;top:165px;width:6px;height:38px;background:#e0e0e0;"></div>
<svg class="s" style="left:1224px;top:168px;" width="32" height="30" viewBox="0 0 32 30"><path d="M5.5,4.8 L15,14.6 L5.5,24.6 M16.3,4.8 L25.8,14.6 L16.3,24.6" fill="none" stroke="#7a7a7a" stroke-width="1.5"/></svg>
<svg class="s" style="left:1223.5px;top:209px;" width="35.099999999999994" height="32.76" viewBox="0 0 35.099999999999994 32.76"><g transform="scale(1.17)"><path d="M6.2,14.5 L13.4,7.3 L21.3,14.5 L13.4,21.6 Z" fill="none" stroke="#333" stroke-width="2.4" stroke-linejoin="round"/><path d="M6.4,14.8 H21 L13.4,21.6 Z" fill="#333"/><path d="M13.4,7.3 L10.3,3.9" stroke="#333" stroke-width="2.4" stroke-linecap="round"/><circle cx="21.9" cy="19.4" r="1.5" fill="#555"/></g></svg>
<div class="b" style="left:1218.7px;top:259.6px;width:42.4px;height:42.6px;background:#0a78ee;"></div>
<svg class="s" style="left:1224px;top:264px;" width="32" height="32" viewBox="0 0 32 32"><rect x="7.1" y="7.2" width="5.9" height="6.4" rx="0.8" fill="none" stroke="#fff" stroke-width="1.9"/><rect x="7.1" y="18.2" width="5.9" height="6.8" rx="0.8" fill="none" stroke="#fff" stroke-width="1.9"/><rect x="18.1" y="18.2" width="6.5" height="6.8" rx="0.8" fill="none" stroke="#fff" stroke-width="1.9"/><path d="M22,7.2 H18.9 Q18.1,7.2 18.1,8 V12.8 Q18.1,13.6 18.9,13.6 H23.8 Q24.6,13.6 24.6,12.8 V10" fill="none" stroke="#fff" stroke-width="1.9"/><circle cx="24.6" cy="7" r="1.2" fill="#fff"/></svg>
<svg class="s" style="left:1224px;top:320px;" width="32" height="32" viewBox="0 0 32 32"><rect x="6.5" y="7.4" width="19.7" height="17.5" fill="none" stroke="#3c3c3c" stroke-width="2.6"/><path d="M7.5,23.8 V22.5 Q9.5,19.3 11.1,19.3 Q12.8,19.3 14.5,21.4 L19.7,16.6 L25.2,22.3 V23.8 Z" fill="#7a7a7a"/><circle cx="11.1" cy="12.3" r="1.6" fill="#3c3c3c"/></svg>
<svg class="s" style="left:1224px;top:376px;" width="32" height="32" viewBox="0 0 32 32"><path d="M6,12.4 L16,6.6 L26,12.4 L16,18.2 Z" fill="none" stroke="#3c3c3c" stroke-width="2.6" stroke-linejoin="round"/><path d="M6,18.2 L16,24.6 L26,18.2" fill="none" stroke="#3c3c3c" stroke-width="2.6" stroke-linejoin="round"/></svg>
<svg class="s" style="left:1224px;top:432px;" width="32" height="32" viewBox="0 0 32 32"><path d="M7.3,5.8 H20.3 L24.4,9.8 V25 H7.3 Z" fill="none" stroke="#3c3c3c" stroke-width="2.5" stroke-linejoin="round"/><path d="M20.3,5.8 V9.8 H24.4 Z" fill="#3c3c3c"/><path d="M10.3,14.1 H12.3 M14,14.1 H22 M10.3,19.3 H12.3 M14,19.3 H22" stroke="#3c3c3c" stroke-width="2"/></svg>
<svg class="s" style="left:1224px;top:488px;" width="32" height="32" viewBox="0 0 32 32"><path d="M5.9,5.7 V25.2 H26.6" fill="none" stroke="#3c3c3c" stroke-width="2.6" stroke-linecap="round"/><path d="M11.1,18.7 L17.4,11.1 L23.5,18.7" fill="none" stroke="#3c3c3c" stroke-width="1.3"/><circle cx="11.1" cy="18.7" r="2.2" fill="#3c3c3c"/><circle cx="17.4" cy="11.1" r="2.2" fill="#3c3c3c"/><circle cx="23.5" cy="18.7" r="2.2" fill="#3c3c3c"/></svg>
<svg class="s" style="left:1224px;top:542px;" width="32" height="32" viewBox="0 0 32 32"><rect x="5.4" y="5.7" width="20.6" height="20.7" rx="2.6" fill="#3c3c3c"/><rect x="7.6" y="8" width="16.2" height="3.5" fill="#f4f4f4"/><rect x="7.6" y="14.1" width="3.9" height="3.9" fill="#f4f4f4"/><rect x="13.8" y="14.1" width="3.8" height="3.9" fill="#f4f4f4"/><rect x="19.9" y="14.1" width="3.9" height="3.9" fill="#f4f4f4"/><rect x="7.6" y="20.3" width="3.9" height="3.8" fill="#f4f4f4"/><rect x="13.8" y="20.3" width="3.8" height="3.8" fill="#f4f4f4"/><rect x="19.9" y="20.3" width="3.9" height="3.8" fill="#f4f4f4"/></svg>
<svg class="s" style="left:1224px;top:598px;" width="32" height="32" viewBox="0 0 32 32"><path d="M6.7,7.9 H18.3 V12.1 H24.4 V24.2 H6.7 Z" fill="none" stroke="#3c3c3c" stroke-width="2.5"/><path d="M6.7,13.4 H12.2 V7.9 M6.7,18.7 H13 V24.2 M18.3,12.1 V14.3 M18.3,19.4 V24.2" fill="none" stroke="#3c3c3c" stroke-width="2.5"/></svg>
<svg class="s" style="left:1224px;top:654px;" width="32" height="32" viewBox="0 0 32 32"><path d="M6.3,10 V7.6 H26.2 V10" fill="none" stroke="#3c3c3c" stroke-width="2.6"/><rect x="7.6" y="14" width="9.6" height="2.8" rx="1" fill="#3c3c3c"/><path d="M17,15.4 H22.6 Q23.3,15.4 23.3,16.2 V23" fill="none" stroke="#3c3c3c" stroke-width="1.3"/><rect x="15.1" y="22.6" width="10.9" height="3" fill="#3c3c3c"/></svg>
<svg class="s" style="left:1224px;top:710px;" width="32" height="32" viewBox="0 0 32 32"><rect x="5" y="7.1" width="5.9" height="4.4" rx="1" fill="#3c3c3c"/><rect x="21.2" y="7.1" width="6" height="4.4" rx="1" fill="#3c3c3c"/><rect x="5" y="21.2" width="5.9" height="4.4" rx="1" fill="#3c3c3c"/><rect x="21.2" y="21.2" width="6" height="4.4" rx="1" fill="#3c3c3c"/><rect x="12.7" y="14.5" width="7.3" height="3.4" rx="1" fill="#3c3c3c"/><path d="M10.9,9.3 Q14.4,9.3 14.4,14.7 M21.2,9.3 Q17.7,9.3 17.7,14.7 M10.9,23.4 Q14.4,23.4 14.4,17.6 M21.2,23.4 Q17.7,23.4 17.7,17.6" fill="none" stroke="#3c3c3c" stroke-width="1.3"/></svg>
<div class="b" style="left:260.5px;top:795.5px;width:958px;height:21.5px;background:#f4f4f4;"></div>
<svg class="s" style="left:267.5px;top:796px;" width="24.599999999999998" height="22.959999999999997" viewBox="0 0 24.599999999999998 22.959999999999997"><g transform="scale(0.82)"><path d="M6.2,14.5 L13.4,7.3 L21.3,14.5 L13.4,21.6 Z" fill="none" stroke="#333" stroke-width="2.4" stroke-linejoin="round"/><path d="M6.4,14.8 H21 L13.4,21.6 Z" fill="#333"/><path d="M13.4,7.3 L10.3,3.9" stroke="#333" stroke-width="2.4" stroke-linecap="round"/><circle cx="21.9" cy="19.4" r="1.5" fill="#555"/></g></svg>
<svg class="s" style="left:300px;top:797.6px" width="918" height="18"><rect x="0.00" y="0" width="9.20" height="17.4" fill="#b5121b"/><rect x="10.20" y="0" width="9.20" height="17.4" fill="#de0f20"/><rect x="20.39" y="0" width="9.20" height="17.4" fill="#c94a6c"/><rect x="30.59" y="0" width="9.20" height="17.4" fill="#e6505e"/><rect x="40.79" y="0" width="9.20" height="17.4" fill="#e8606a"/><rect x="50.98" y="0" width="9.20" height="17.4" fill="#e25a9c"/><rect x="61.18" y="0" width="9.20" height="17.4" fill="#e298b8"/><rect x="71.38" y="0" width="9.20" height="17.4" fill="#ee8a88"/><rect x="81.57" y="0" width="9.20" height="17.4" fill="#e88a9c"/><rect x="91.77" y="0" width="9.20" height="17.4" fill="#f4a070"/><rect x="101.97" y="0" width="9.20" height="17.4" fill="#eeaa8a"/><rect x="112.16" y="0" width="9.20" height="17.4" fill="#f2b8b0"/><rect x="122.36" y="0" width="9.20" height="17.4" fill="#e4d4ea"/><rect x="132.56" y="0" width="9.20" height="17.4" fill="#fbd0df"/><rect x="142.75" y="0" width="9.20" height="17.4" fill="#fce0e6"/><rect x="152.95" y="0" width="9.20" height="17.4" fill="#17215a"/><rect x="163.15" y="0" width="9.20" height="17.4" fill="#223877"/><rect x="173.34" y="0" width="9.20" height="17.4" fill="#3d2b82"/><rect x="183.54" y="0" width="9.20" height="17.4" fill="#143f88"/><rect x="193.74" y="0" width="9.20" height="17.4" fill="#1661a0"/><rect x="203.93" y="0" width="9.20" height="17.4" fill="#3a58a8"/><rect x="214.13" y="0" width="9.20" height="17.4" fill="#4f86c6"/><rect x="224.33" y="0" width="9.20" height="17.4" fill="#0a78d0"/><rect x="234.52" y="0" width="9.20" height="17.4" fill="#0a88cc"/><rect x="244.72" y="0" width="9.20" height="17.4" fill="#2a9ada"/><rect x="254.92" y="0" width="9.20" height="17.4" fill="#10aee8"/><rect x="265.11" y="0" width="9.20" height="17.4" fill="#28b8ec"/><rect x="275.31" y="0" width="9.20" height="17.4" fill="#90c4ea"/><rect x="285.51" y="0" width="9.20" height="17.4" fill="#a8d4f0"/><rect x="295.70" y="0" width="9.20" height="17.4" fill="#d8e8f0"/><rect x="305.90" y="0" width="9.20" height="17.4" fill="#0a4a36"/><rect x="316.10" y="0" width="9.20" height="17.4" fill="#0b5e3a"/><rect x="326.29" y="0" width="9.20" height="17.4" fill="#0a6868"/><rect x="336.49" y="0" width="9.20" height="17.4" fill="#5e6a30"/><rect x="346.69" y="0" width="9.20" height="17.4" fill="#0c7a48"/><rect x="356.88" y="0" width="9.20" height="17.4" fill="#22983a"/><rect x="367.08" y="0" width="9.20" height="17.4" fill="#10a0a0"/><rect x="377.28" y="0" width="9.20" height="17.4" fill="#48b0c0"/><rect x="387.47" y="0" width="9.20" height="17.4" fill="#1ec8b0"/><rect x="397.67" y="0" width="9.20" height="17.4" fill="#40b888"/><rect x="407.87" y="0" width="9.20" height="17.4" fill="#10aa50"/><rect x="418.06" y="0" width="9.20" height="17.4" fill="#88c020"/><rect x="428.26" y="0" width="9.20" height="17.4" fill="#a8cc50"/><rect x="438.46" y="0" width="9.20" height="17.4" fill="#c8d840"/><rect x="448.65" y="0" width="9.20" height="17.4" fill="#d0e4d0"/><rect x="458.85" y="0" width="9.20" height="17.4" fill="#e84a20"/><rect x="469.05" y="0" width="9.20" height="17.4" fill="#f06a08"/><rect x="479.24" y="0" width="9.20" height="17.4" fill="#f08010"/><rect x="489.44" y="0" width="9.20" height="17.4" fill="#f09050"/><rect x="499.64" y="0" width="9.20" height="17.4" fill="#f0a010"/><rect x="509.83" y="0" width="9.20" height="17.4" fill="#f8b008"/><rect x="520.03" y="0" width="9.20" height="17.4" fill="#f8b830"/><rect x="530.23" y="0" width="9.20" height="17.4" fill="#f8c830"/><rect x="540.42" y="0" width="9.20" height="17.4" fill="#f8d808"/><rect x="550.62" y="0" width="9.20" height="17.4" fill="#f8f008"/><rect x="560.82" y="0" width="9.20" height="17.4" fill="#f8f0a0"/><rect x="571.01" y="0" width="9.20" height="17.4" fill="#f8c870"/><rect x="581.21" y="0" width="9.20" height="17.4" fill="#e8c898"/><rect x="591.41" y="0" width="9.20" height="17.4" fill="#f8d8a8"/><rect x="601.60" y="0" width="9.20" height="17.4" fill="#fce8d8"/><rect x="611.80" y="0" width="9.20" height="17.4" fill="#7a2a7a"/><rect x="622.00" y="0" width="9.20" height="17.4" fill="#8a3a90"/><rect x="632.19" y="0" width="9.20" height="17.4" fill="#6a3aa8"/><rect x="642.39" y="0" width="9.20" height="17.4" fill="#6a4a9a"/><rect x="652.59" y="0" width="9.20" height="17.4" fill="#9a60a8"/><rect x="662.78" y="0" width="9.20" height="17.4" fill="#a05080"/><rect x="672.98" y="0" width="9.20" height="17.4" fill="#d070b0"/><rect x="683.18" y="0" width="9.20" height="17.4" fill="#a890d0"/><rect x="693.37" y="0" width="9.20" height="17.4" fill="#c8a0d0"/><rect x="703.57" y="0" width="9.20" height="17.4" fill="#f0c8e0"/><rect x="713.77" y="0" width="9.20" height="17.4" fill="#5a2a18"/><rect x="723.96" y="0" width="9.20" height="17.4" fill="#7a3a20"/><rect x="734.16" y="0" width="9.20" height="17.4" fill="#9a4a20"/><rect x="744.36" y="0" width="9.20" height="17.4" fill="#b05020"/><rect x="754.55" y="0" width="9.20" height="17.4" fill="#c07838"/><rect x="764.75" y="0" width="9.20" height="17.4" fill="#b07860"/><rect x="774.95" y="0" width="9.20" height="17.4" fill="#e0b070"/><rect x="785.14" y="0" width="9.20" height="17.4" fill="#d8d0cc"/><rect x="795.34" y="0" width="9.20" height="17.4" fill="#d0d8d4"/><rect x="805.54" y="0" width="9.20" height="17.4" fill="#000000"/><rect x="815.73" y="0" width="9.20" height="17.4" fill="#383838"/><rect x="825.93" y="0" width="9.20" height="17.4" fill="#585858"/><rect x="836.13" y="0" width="9.20" height="17.4" fill="#6a6a6a"/><rect x="846.32" y="0" width="9.20" height="17.4" fill="#7e7e7e"/><rect x="856.52" y="0" width="9.20" height="17.4" fill="#909090"/><rect x="866.72" y="0" width="9.20" height="17.4" fill="#a8a8a8"/><rect x="876.91" y="0" width="9.20" height="17.4" fill="#c8c8c8"/><rect x="887.11" y="0" width="9.20" height="17.4" fill="#dcdcdc"/><rect x="897.31" y="0" width="9.20" height="17.4" fill="#ececec"/><rect x="907.50" y="0" width="9.20" height="17.4" fill="#ffffff"/></svg>
<div class="b" style="left:1218.3px;top:785px;width:1px;height:32px;background:#d4d4d4;"></div>
<div class="b" style="left:0px;top:816.5px;width:1268px;height:1px;background:#dcdcdc;"></div>
<div class="b" style="left:0px;top:817.5px;width:1268px;height:20px;background:#f4f4f4;"></div>
<svg class="s" style="left:20px;top:826px;" width="32" height="12" viewBox="0 0 32 12"><path d="M3.2,3 V12 M28.8,3 V12" stroke="#777" stroke-width="1.6"/><rect x="7.5" y="4" width="17" height="14" fill="none" stroke="#555" stroke-width="2.4"/></svg>
<div class="t" style="left:80px;top:830px;font-size:15px;color:#333;">页 1</div>
<div class="b" style="left:201.7px;top:835px;width:10px;height:2px;background:#666;"></div>
<div class="b" style="left:213px;top:817.5px;width:1px;height:20px;background:#dcdcdc;"></div>
<div class="t" style="left:250px;top:830px;font-size:15px;color:#111;font-weight:bold">页 1</div>
<svg class="s" style="left:318px;top:826px;" width="20" height="12" viewBox="0 0 20 12"><path d="M4,8 H17 M10.5,2 V14" stroke="#555" stroke-width="1.6"/></svg>
<svg class="s" style="left:1254px;top:825px;" width="20" height="14" viewBox="0 0 20 14"><circle cx="15" cy="12" r="7" fill="none" stroke="#444" stroke-width="1.8"/></svg>
</body></html>
